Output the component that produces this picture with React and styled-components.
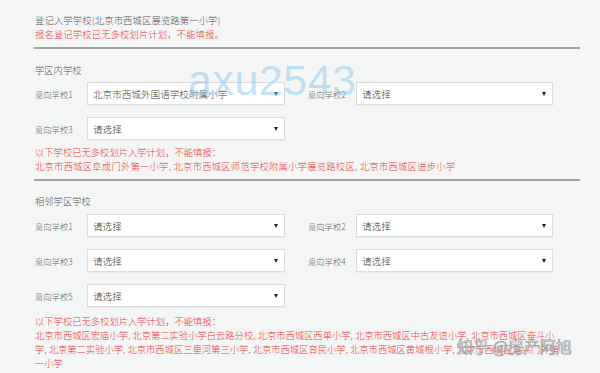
import React from "react";
import styled, { createGlobalStyle } from "styled-components";

const Global = createGlobalStyle`
  html, body { margin: 0; padding: 0; background: #f4f5f5; }
  body { font-family: "Noto Sans CJK SC", "Noto Sans", sans-serif; }
`;

const Page = styled.div`
  position: relative;
  width: 600px;
  height: 373px;
  overflow: hidden;
  box-sizing: border-box;
  padding: 13px 20px 0 34px;
  background: #f4f5f5;
`;

const Text = styled.div`
  font-size: ${(p) => p.$size || 9.3}px;
  line-height: 14px;
  font-weight: 300;
  color: ${(p) => (p.$red ? "#e8413f" : "#555")};
  white-space: nowrap;
  margin-top: ${(p) => p.$mt || 0}px;
  padding-left: 1px;
  letter-spacing: ${(p) => p.$ls || 0}px;
`;

const Divider = styled.div`
  height: 2px;
  width: 546px;
  background: #a3a3a3;
  margin-top: ${(p) => p.$mt}px;
`;

const Rows = styled.div`
  display: flex;
  flex-direction: column;
  gap: 12px;
  margin-top: ${(p) => p.$mt}px;
`;

const Row = styled.div`
  display: flex;
  gap: 22px;
`;

const Field = styled.div`
  display: flex;
  align-items: center;
`;

const Label = styled.span`
  width: ${(p) => p.$w}px;
  font-size: 8.3px;
  font-weight: 300;
  color: #666;
  padding-left: 1px;
  box-sizing: border-box;
  white-space: nowrap;
`;

const Select = styled.div`
  position: relative;
  box-sizing: border-box;
  width: ${(p) => p.$w || 198}px;
  height: 23px;
  background: #fff;
  border: 1px solid #dcdcdc;
  box-shadow: 0 1px 1px rgba(0, 0, 0, 0.04);
  display: flex;
  align-items: center;
  padding-left: 5px;
  font-size: 9.6px;
  font-weight: 300;
  color: #444;
  white-space: nowrap;
`;

const Arrow = styled.span`
  position: absolute;
  right: 6px;
  top: 50%;
  margin-top: -2px;
  width: 0;
  height: 0;
  border-left: 2.5px solid transparent;
  border-right: 2.5px solid transparent;
  border-top: 4px solid #222;
`;

const Watermark = styled.div`
  position: absolute;
  left: 188px;
  top: 55px;
  font-family: "Liberation Sans", Arial, sans-serif;
  font-size: 43px;
  line-height: 50px;
  letter-spacing: 0.5px;
  color: rgba(140, 200, 238, 0.5);
  pointer-events: none;
`;

const Zhihu = styled.div`
  position: absolute;
  left: 457px;
  top: 336px;
  font-size: 16px;
  line-height: 20px;
  color: rgba(255, 255, 255, 0.85);
  -webkit-text-stroke: 0.7px rgba(110, 110, 110, 0.7);
  white-space: nowrap;
  pointer-events: none;
`;

const Choice = ({ label, labelW = 53, value = "请选择", w }) => (
  <Field>
    <Label $w={labelW}>{label}</Label>
    <Select $w={w}>
      {value}
      <Arrow />
    </Select>
  </Field>
);

export default function App() {
  return (
    <>
      <Global />
      <Page>
        <Text $ls={0.15}>登记入学学校(北京市西城区展览路第一小学)</Text>
        <Text $red $ls={0.15}>报名登记学校已无多校划片计划，不能填报。</Text>
        <Divider $mt={6} />

        <Text $mt={14}>学区内学校</Text>
        <Rows $mt={5}>
          <Row>
            <Choice label="意向学校1" value="北京市西城外国语学校附属小学" />
            <Choice label="意向学校2" labelW={49} w={197} />
          </Row>
          <Row>
            <Choice label="意向学校3" />
          </Row>
        </Rows>
        <Text $red $mt={5}>以下学校已无多校划片入学计划，不能填报：</Text>
        <Text $red $ls={0.25}>
          北京市西城区阜成门外第一小学, 北京市西城区师范学校附属小学展览路校区, 北京市西城区进步小学
        </Text>
        <Divider $mt={6} />

        <Text $mt={13}>相邻学区学校</Text>
        <Rows $mt={6}>
          <Row>
            <Choice label="意向学校1" />
            <Choice label="意向学校2" labelW={49} w={197} />
          </Row>
          <Row>
            <Choice label="意向学校3" />
            <Choice label="意向学校4" labelW={49} w={197} />
          </Row>
          <Row>
            <Choice label="意向学校5" />
          </Row>
        </Rows>
        <Text $red $mt={7}>以下学校已无多校划片入学计划，不能填报：</Text>
        <Text $red>
          北京市西城区宏庙小学, 北京第二实验小学白云路分校, 北京市西城区西单小学, 北京市西城区中古友谊小学, 北京市西城区奋斗小
        </Text>
        <Text $red>
          学, 北京第二实验小学, 北京市西城区三里河第三小学, 北京市西城区育民小学, 北京市西城区黄城根小学, 北京市西城区复兴门外第
        </Text>
        <Text $red>一小学</Text>

        <Watermark>axu2543</Watermark>
        <Zhihu>知乎 @房产阿旭</Zhihu>
      </Page>
    </>
  );
}
